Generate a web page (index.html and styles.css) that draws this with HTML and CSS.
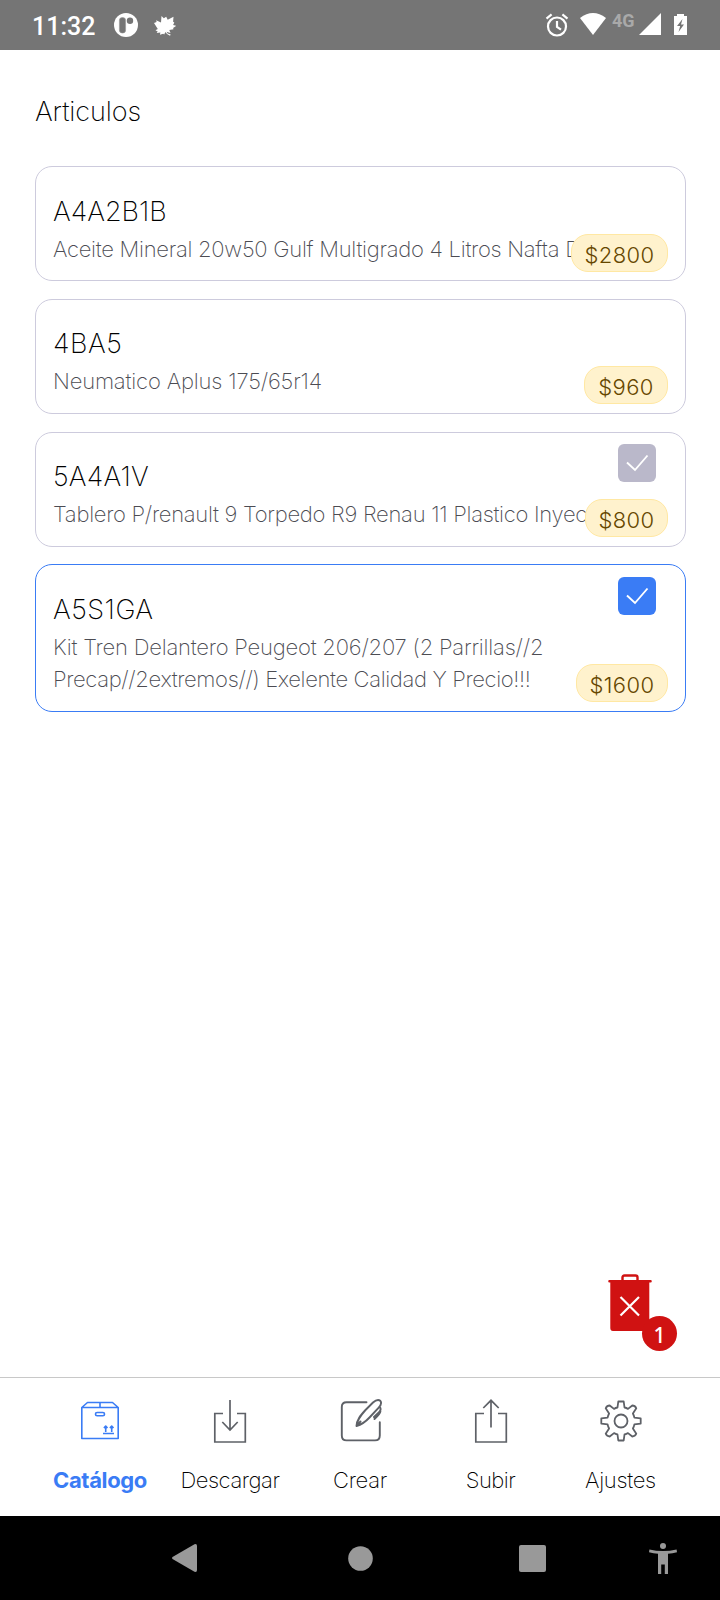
FILE: index.html
```html
<!DOCTYPE html>
<html lang="es">
<head>
<meta charset="utf-8">
<title>Articulos</title>
<link rel="stylesheet" href="styles.css">
</head>
<body>
<div class="screen">
  <header class="status">
    <span class="clock">11:32</span>
    <svg class="s-app" width="24" height="24" viewBox="0 0 24 24"><circle cx="12" cy="12" r="12" fill="#fff"/><rect x="5.4" y="4.6" width="6.2" height="15.4" rx="2.8" fill="#757575" stroke="#999" stroke-width=".6"/><circle cx="16" cy="7.8" r="3.2" fill="#757575"/></svg>
    <svg class="s-leaf" width="22" height="20" viewBox="0 0 22 20"><path fill="#fff" d="M7.500 0l2.300 2.200L12.200.8l1.500 3L19.500.7l-.4 5 1.200.9-1.200 2.400 3 .9-3 2 .4 1.300-4.200.8 1.200 3-4-1.200 1.200 1.600 3 1.200-.7 1.200-3-1.700-1.600-2-1.200 2.400-1-.7-3.300 1 .5-2.300-3.700.6 1-1.500-2.200-1.400 2.300-1.200L0 7l2.600-1-.5-1.800L7 6.400z"/></svg>
    <span class="spacer"></span>
    <svg class="s-alarm" width="24" height="24" viewBox="0 0 24 24" fill="none" stroke="#fff" stroke-width="2.200"><circle cx="12" cy="13.500" r="9"/><path d="M12 8v6l4 2.600M1.500 5.600L6.600 1.400M22.500 5.600L17.400 1.400"/></svg>
    <svg class="s-wifi" width="26" height="22" viewBox="0 0 26 22"><path fill="#fff" d="M0 5Q13-5 26 5L13 22z"/></svg>
    <span class="net">4G</span>
    <svg class="s-signal" width="22" height="22" viewBox="0 0 22 22"><path fill="#fff" d="M22 0v22H0z"/></svg>
    <svg class="s-battery" width="13" height="21" viewBox="0 0 13 21"><path fill="#fff" d="M3 0h7v2h3v19H0V2h3z"/><path fill="#757575" d="M8.500 5L3 12h3.200L4.500 18 10 10.500H7z"/></svg>
  </header>

  <main class="content">
    <h1 class="title">Articulos</h1>
    <section class="list">
      <article class="card first">
        <h2 class="code c1">A4A2B1B</h2>
        <p class="desc d1">Aceite Mineral 20w50 Gulf Multigrado 4 Litros Nafta D</p>
        <span class="price p1">$2800</span>
      </article>
      <article class="card">
        <h2 class="code c2">4BA5</h2>
        <p class="desc d2">Neumatico Aplus 175/65r14</p>
        <span class="price p2">$960</span>
      </article>
      <article class="card">
        <h2 class="code c3">5A4A1V</h2>
        <p class="desc d3">Tablero P/renault 9 Torpedo R9 Renau 11 Plastico Inyec</p>
        <span class="check"><svg width="38" height="38" viewBox="0 0 38 38"><path d="M9 18.500l8 7.500L29.500 11.500"/></svg></span>
        <span class="price p3">$800</span>
      </article>
      <article class="card selected">
        <h2 class="code c4">A5S1GA</h2>
        <p class="desc"><span class="d4">Kit Tren Delantero Peugeot 206/207 (2 Parrillas//2</span><br><span class="d5">Precap//2extremos//) Exelente Calidad Y Precio!!!</span></p>
        <span class="check"><svg width="38" height="38" viewBox="0 0 38 38"><path d="M9 18.500l8 7.500L29.500 11.500"/></svg></span>
        <span class="price p4">$1600</span>
      </article>
    </section>
    <div class="trash">
      <svg width="44" height="57" viewBox="0 0 44 57"><path d="M14.500 7V3.500Q14.500 1.500 16.500 1.500H27.500Q29.500 1.500 29.500 3.500V7" fill="none" stroke="#d01212" stroke-width="2.400"/><path d="M1.500 6h41a1.200 1.200 0 0 1 0 2.600H41.300V57H5Q2.300 57 2.300 54V8.600H1.500a1.200 1.200 0 0 1 0-2.600z" fill="#d01212"/><path d="M12.500 23L31 41.500M31 23L12.500 41.500" stroke="#fff" stroke-width="2.200"/></svg>
      <span class="count">1</span>
    </div>
  </main>

  <nav class="tabs">
    <div class="tab active">
      <svg width="46" height="46" viewBox="0 0 46 46" fill="none" stroke="#3a7cf5" stroke-width="1.600" stroke-linejoin="round"><path d="M4.800 9.500H41.200V40.500H4.800zM4.800 9.500L10.500 4.500H35.500L41.200 9.500M23 4.500V9.500"/><rect x="18.500" y="14.500" width="9" height="3.300" rx="1.600"/><path d="M26 35.500H37M28.700 34V28M26.900 30L28.700 28l1.800 2M34.700 34V28M32.900 30l1.800-2 1.800 2"/></svg>
      <span class="t1">Catálogo</span>
    </div>
    <div class="tab">
      <svg width="46" height="46" viewBox="0 0 46 46" fill="none" stroke="#5e6167" stroke-width="1.700"><path d="M16 15.500H7.800V44H38.300V15.500H30M23 2V31.500M15.300 24L23 32l7.700-8"/></svg>
      <span class="t2">Descargar</span>
    </div>
    <div class="tab">
      <svg width="46" height="46" viewBox="-1 -0.5 46 46" fill="none" stroke="#5e6167" stroke-width="1.900" stroke-linecap="round" stroke-linejoin="round"><path d="M28.500 3.800H8.500Q3.800 3.800 3.800 8.500V37Q3.800 41.900 8.500 41.900H37Q41.800 41.900 41.800 37V23.800"/><path d="M18.500 27.500C18.700 21.500 22.500 17 27.500 11.500L35 4Q39.500 0 42.300 2.300Q44.500 5 40.500 9.300L31.500 19Q25.500 25.500 18.500 27.500zL22.500 23M41.600 8.500Q44 10.500 40.800 14L36 18.500M42.300 12.300Q43.500 14 36.500 20.500"/></svg>
      <span class="t3">Crear</span>
    </div>
    <div class="tab">
      <svg width="46" height="46" viewBox="-1 0 46 46" fill="none" stroke="#5e6167" stroke-width="1.700"><path d="M16 15.500H7.800V44H38.300V15.500H30M23 29.500V2.500M15.300 10L23 2.300l7.700 7.700"/></svg>
      <span class="t4">Subir</span>
    </div>
    <div class="tab">
      <svg width="46" height="46" viewBox="-1 -1 46 46" fill="none" stroke="#5e6167" stroke-width="1.800" stroke-linejoin="round"><path d="M20.300 2.500h5.400l.8 6Q28.500 8.800 30 9.900L34.300 6.500Q37 6.500 38.300 9.300L34.900 14.500Q36 16.500 36.400 18.700L42.700 19.400v5.200L36.400 25.300Q36 27.500 34.900 29.500L38.300 34.700Q37 37.500 34.300 37.500L30 34.100Q28.500 35.200 26.500 35.500l-.8 6h-5.400l-.8-6Q17.500 35.200 16 34.100L11.700 37.500Q9 37.500 7.700 34.700L11.100 29.500Q10 27.500 9.600 25.300L3.300 24.600v-5.200L9.600 18.700Q10 16.500 11.100 14.500L7.700 9.300Q9 6.500 11.700 6.500L16 9.900Q17.500 8.800 19.500 8.500z"/><circle cx="23" cy="22" r="6.500"/></svg>
      <span class="t5">Ajustes</span>
    </div>
  </nav>

  <footer class="sysnav">
    <svg class="back" width="25" height="28" viewBox="0 0 25 28"><path d="M.5 13Q-.3 14 .5 15L22.500 27.800Q25 28.500 25 26V2Q25-.5 22.500.2z"/></svg>
    <svg class="home" width="25" height="25" viewBox="0 0 25 25"><circle cx="12.500" cy="12.500" r="12.300"/></svg>
    <svg class="recent" width="27" height="27" viewBox="0 0 27 27"><rect width="27" height="27" rx="2"/></svg>
    <svg class="access" width="28" height="31" viewBox="0 0 28 31"><circle cx="14" cy="3" r="3"/><path d="M.4 6.500Q14 9.500 27.600 6.500L28 9.300Q23.500 10.400 19 10.800V31H15.800V21.500H12.200V31H9V10.800Q4.500 10.400 0 9.300z"/></svg>
  </footer>
</div>
</body>
</html>
```
FILE: styles.css
```css
* { box-sizing: border-box; }

body {
  margin: 0;
  background: #fff;
  font-family: Inter, "Noto Sans", sans-serif;
}

.screen {
  display: flex;
  flex-direction: column;
  width: 720px;
  height: 1600px;
  overflow: hidden;
}

svg { display: block; flex: none; }

.status {
  display: flex;
  align-items: flex-start;
  height: 50px;
  padding: 13px 33px 0 32px;
  background: #757575;
  color: #fff;
  font-family: Roboto, sans-serif;
}
.clock {
  width: 82px;
  font-size: 25px;
  font-weight: 500;
  line-height: 27px;
}
.s-leaf { margin: 3px 0 0 16px; }
.spacer { flex: 1; }
.s-wifi { margin-left: 11px; }
.net {
  width: 33px;
  padding-left: 6px;
  color: #a9a9a9;
  font-size: 18px;
  font-weight: 700;
  line-height: 15px;
}
.s-battery { margin: 1px 0 0 13px; }

.content {
  position: relative;
  flex: 1;
  padding: 43px 34px 0 35px;
}
.title {
  height: 73px;
  margin: 0;
  font-size: 27px;
  font-weight: 200;
  line-height: 38px;
  letter-spacing: -0.1px;
}

.list { display: grid; gap: 18px; }
.card {
  position: relative;
  height: 115px;
  padding: 26px 17px 0 17px;
  border: 1px solid #cdcbdd;
  border-radius: 17px;
}
.card.first { padding-top: 27px; }
.card.selected {
  height: 148px;
  margin-top: -1px;
  padding-top: 27px;
  border-color: #3a7cf5;
}
.code {
  margin: 0 0 3px;
  font-size: 27px;
  font-weight: 200;
  line-height: 36px;
}
.c1 { letter-spacing: 0; }
.c2, .c4 { letter-spacing: 0.5px; }
.c3 { letter-spacing: 0.2px; }
.desc {
  margin: 0;
  color: #4c4c53;
  font-size: 22px;
  font-weight: 200;
  line-height: 32px;
  white-space: nowrap;
}
.d1 { letter-spacing: -0.28px; }
.d2 { letter-spacing: -0.17px; }
.d3 { letter-spacing: -0.29px; }
.d4 { letter-spacing: -0.21px; }
.d5 { letter-spacing: -0.36px; }
.price {
  position: absolute;
  right: 17px;
  bottom: 9px;
  height: 38px;
  border: 1px solid #ffe8a3;
  border-radius: 17px;
  background: #fff2cd;
  color: #664700;
  font-size: 22px;
  font-weight: 300;
  line-height: 41px;
  letter-spacing: 0.4px;
  text-align: center;
}
.first .price { bottom: 8px; }
.p1 { width: 97px; }
.p2 { width: 84px; }
.p3 { width: 83px; }
.p4 { width: 92px; }
.check {
  position: absolute;
  top: 11px;
  right: 29px;
  width: 38px;
  height: 38px;
  border-radius: 6px;
  background: #bab8ca;
}
.selected .check { top: 12px; background: #3a7cf5; }
.check path { fill: none; stroke: #fff; stroke-width: 1.9; }

.trash {
  position: absolute;
  right: 43px;
  bottom: 26px;
  width: 70px;
  height: 77px;
  padding-left: 1px;
}
.count {
  position: absolute;
  right: 0;
  bottom: 0;
  width: 35px;
  height: 35px;
  border-radius: 50%;
  background: #d01212;
  color: #fff;
  font: 500 21px/38px "Noto Sans", sans-serif;
  text-align: center;
}

.tabs {
  display: grid;
  grid-template-columns: repeat(5, 130px);
  justify-content: center;
  height: 139px;
  padding-top: 20px;
  border-top: 1px solid #c8c8c8;
}
.tab {
  display: flex;
  flex-direction: column;
  align-items: center;
  gap: 20px;
  font-size: 22px;
  font-weight: 200;
  line-height: 32px;
}
.tab.active { color: #3a7cf5; font-weight: 700; }
.t1 { letter-spacing: -0.35px; }
.t2 { letter-spacing: -0.45px; }
.t3 { letter-spacing: -0.3px; }
.t4 { letter-spacing: -0.5px; padding-left: 1px; }
.t5 { letter-spacing: -0.3px; padding-left: 1px; }

.sysnav {
  display: flex;
  align-items: center;
  height: 84px;
  padding-left: 172px;
  background: #000;
  fill: #999;
}
.home { margin-left: 151px; }
.recent { margin-left: 146px; }
.access { margin-left: 103px; }
```
